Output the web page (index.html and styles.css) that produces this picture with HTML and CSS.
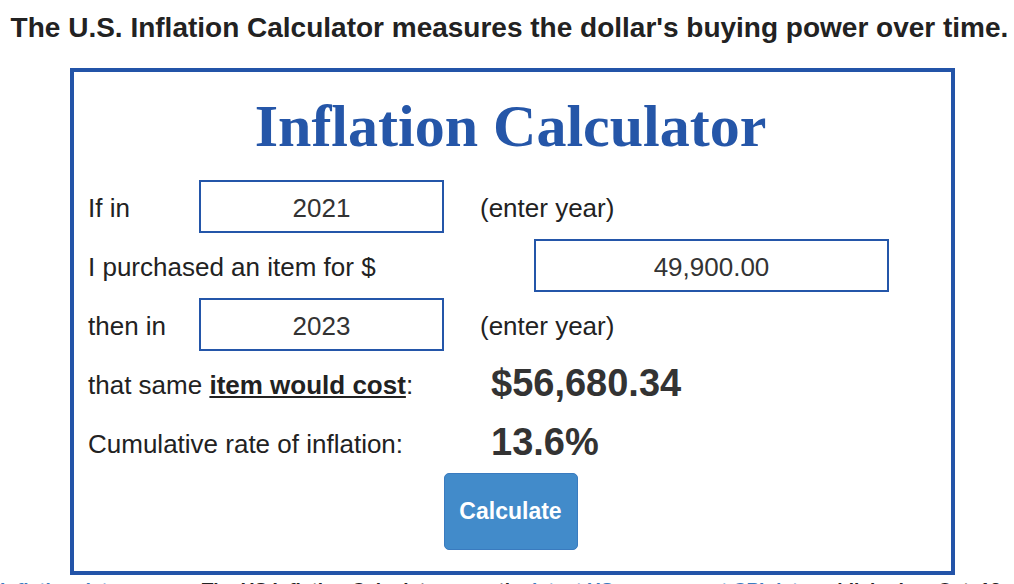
FILE: index.html
```html
<!DOCTYPE html>
<html lang="en">
<head>
    <meta charset="UTF-8">
    <title>U.S. Inflation Calculator</title>
    <link rel="stylesheet" href="styles.css">
</head>
<body>
<h1 class="lead">The U.S. Inflation Calculator measures the dollar's buying power over time.</h1>

<div class="calc">
    <h2 class="calc-title">Inflation Calculator</h2>

    <div class="row">
        <label class="lbl lbl-short" for="yearFrom">If in</label>
        <input class="field field-year" type="text" id="yearFrom" value="2021">
        <span class="hint">(enter year)</span>
    </div>
    <div class="row">
        <label class="lbl lbl-wide" for="amount">I purchased an item for $</label>
        <input class="field field-amount" type="text" id="amount" value="49,900.00">
    </div>
    <div class="row">
        <label class="lbl lbl-short" for="yearTo">then in</label>
        <input class="field field-year" type="text" id="yearTo" value="2023">
        <span class="hint">(enter year)</span>
    </div>
    <div class="row">
        <span class="lbl lbl-result">that same <u><b>item would cost</b></u>:</span>
        <span class="result" id="cost">$56,680.34</span>
    </div>
    <div class="row">
        <span class="lbl lbl-result">Cumulative rate of inflation:</span>
        <span class="result" id="rate">13.6%</span>
    </div>
    <div class="actions">
        <button class="btn" type="button">Calculate</button>
    </div>
</div>

<p class="note">
    <a href="#">Inflation data sources</a>
    <b>The US Inflation Calculator uses the</b>
    <a href="#">latest US government CPI data</a>
    <b>published on Oct. 12, 2023 to adjust for inflation.</b>
</p>
</body>
</html>
```

FILE: styles.css
```css
body {
  font-family: 'Liberation Sans', Arial, Helvetica, sans-serif;
  color: #222;
  background-color: #fff;
  margin: 0;
}
.lead {
  font-size: 28px;
  line-height: 32px;
  font-weight: bold;
  text-align: center;
  margin: 12px 0 24px 5px;
  color: #222;
  white-space: nowrap;
}
.calc {
  width: 885px;
  box-sizing: border-box;
  margin: 0 0 0 70px;
  border: 4px solid #2354a8;
  padding: 24px 14px 21px;
}
.calc-title {
  font-family: 'Liberation Serif', 'Times New Roman', serif;
  font-size: 60px;
  line-height: 60px;
  font-weight: bold;
  color: #2556a8;
  text-align: center;
  margin: 0 4px 24px 0;
}
.row {
  display: flex;
  align-items: center;
  height: 53px;
  margin-bottom: 6px;
  font-size: 26px;
  color: #222;
}
.lbl,
.hint {
  padding-top: 4px;
}
.lbl-short {
  width: 111px;
}
.lbl-wide {
  width: 446px;
}
.lbl-result {
  width: 403px;
}
.field {
  box-sizing: border-box;
  height: 53px;
  border: 2px solid #2456a9;
  font-family: inherit;
  font-size: 26px;
  color: #333;
  text-align: center;
  padding: 3px 0 0;
  margin: 0;
}
.field-year {
  width: 245px;
}
.field-amount {
  width: 355px;
}
.hint {
  margin-left: 36px;
}
.result {
  font-size: 38px;
  font-weight: bold;
  color: #333;
}
.actions {
  display: flex;
  justify-content: center;
  margin: -2px 4px 0 0;
}
.btn {
  width: 134px;
  height: 77px;
  background-color: #428bca;
  border: 1px solid #3a7bbf;
  border-radius: 5px;
  color: #fff;
  font-family: inherit;
  font-size: 23px;
  font-weight: bold;
  cursor: pointer;
}
.note {
  font-size: 19px;
  line-height: 24px;
  margin: 3px 0 0;
}
.note a {
  color: #3a7bbf;
  font-weight: bold;
  text-decoration: none;
}
.note b {
  color: #222;
}
```
